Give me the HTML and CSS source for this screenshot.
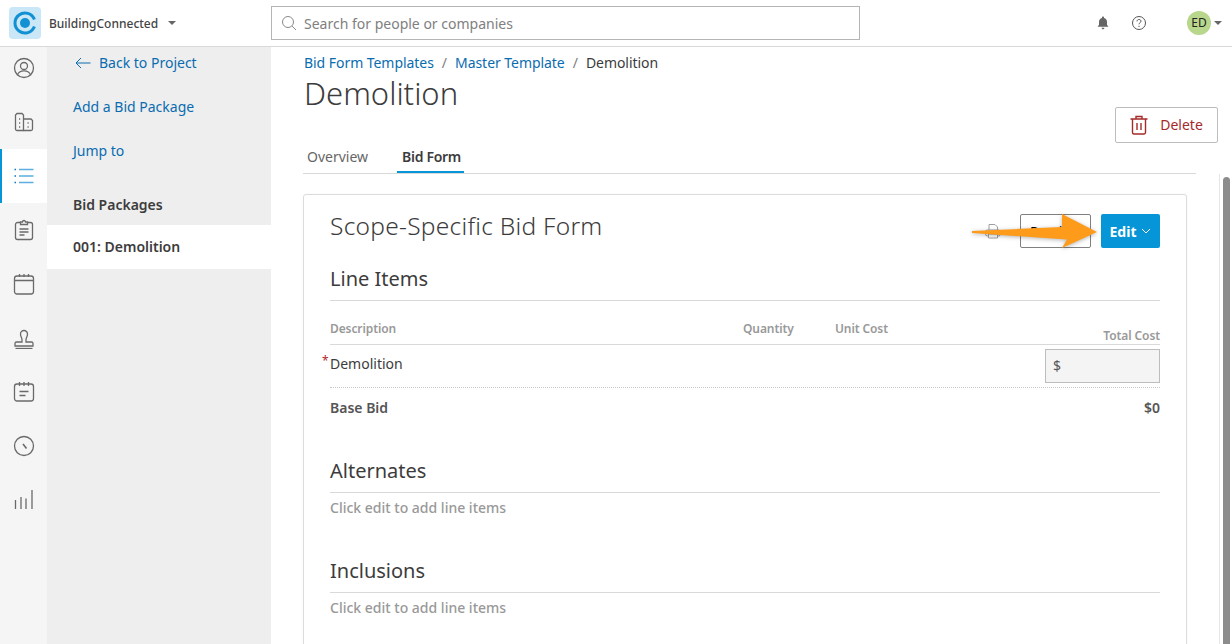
FILE: index.html
```html
<!DOCTYPE html>
<html lang="en">
<head>
  <meta charset="UTF-8" />
  <title>BuildingConnected</title>
  <link rel="stylesheet" href="styles.css">
</head>
<body>

  <!-- Header -->
  <header class="topbar">
    <div class="brand">
      <svg class="brand-logo" viewBox="0 0 32 32" width="32" height="32">
        <rect width="32" height="32" rx="4" fill="#c9e7f6"/>
        <path d="M25.400 12.600A10 10 0 1 0 25.400 19.400" fill="none" stroke="#1190d4" stroke-width="3"/>
        <circle cx="16" cy="16" r="5" fill="#1190d4"/>
      </svg>
      <span class="brand-name">BuildingConnected</span>
      <span class="caret caret-brand"></span>
    </div>
    <div class="search">
      <svg viewBox="0 0 16 16" width="16" height="16" fill="none" stroke="#8a8a8a" stroke-width="1">
        <circle cx="7" cy="7" r="5.5"/>
        <path d="M11 11l4 4"/>
      </svg>
      <span>Search for people or companies</span>
    </div>
    <div class="top-actions">
      <svg viewBox="0 0 14 14" width="14" height="14" fill="#666">
        <path d="M7 0.6c.6 0 1 .4 1 1v.5c2 .5 3 2 3 4v2.6l1.4 2.1H1.6L3 8.700V6.100c0-2 1-3.500 3-4v-.5c0-.6.4-1 1-1z"/>
        <path d="M5.600 11.700h2.800c0 .9-.6 1.500-1.400 1.500s-1.400-.6-1.400-1.500z"/>
      </svg>
      <svg class="help-icon" viewBox="0 0 16 16" width="16" height="16" fill="none" stroke="#555" stroke-width="1">
        <circle cx="8" cy="8" r="6.500"/>
        <path d="M6 6.400c0-1.200.9-1.900 2-1.900s2 .7 2 1.700c0 1.500-2 1.500-2 3.100"/>
        <path d="M8 10.800v1.200"/>
      </svg>
      <div class="avatar">ED</div>
      <span class="caret caret-user"></span>
    </div>
  </header>

  <div class="app">

    <!-- Icon rail -->
    <nav class="rail">
      <a class="rail-item first">
        <svg viewBox="0 0 22 22" width="22" height="22"><circle cx="11" cy="11" r="9.500"/><circle cx="11" cy="9" r="3.500"/><path d="M4.500 18c.8-3 3-4.200 6.500-4.200s5.700 1.200 6.500 4.200"/></svg>
      </a>
      <a class="rail-item">
        <svg viewBox="0 0 22 22" width="22" height="22"><path d="M4 19.500a1.500 1.500 0 0 1-1.500-1.500V4L4 2.500h5L10.500 4V19.500z"/><path d="M10.500 8h7.500l1.500 1.500V18a1.500 1.500 0 0 1-1.500 1.500H10.500"/><path d="M6 8h1.200M6 12h1.200M6 16h1.200M14.500 12h1.200M14.500 16h1.200"/></svg>
      </a>
      <a class="rail-item active">
        <svg viewBox="0 0 22 22" width="22" height="22"><path d="M6 4.500h14.500M6 11h14.500M6 17.500h14.500"/><path class="dot" d="M1.500 4.500h1.500M1.500 11h1.500M1.500 17.500h1.500"/></svg>
      </a>
      <a class="rail-item">
        <svg viewBox="0 0 22 22" width="22" height="22"><path d="M7.500 3.500H4.500a2 2 0 0 0-2 2v13a2 2 0 0 0 2 2h13a2 2 0 0 0 2-2v-13a2 2 0 0 0-2-2h-3"/><path d="M7.500 5.500V3h2a1.500 1.500 0 0 1 3 0h2v2.500z"/><path d="M6.500 10h9M6.500 13h9M6.500 16h5"/></svg>
      </a>
      <a class="rail-item">
        <svg viewBox="0 0 22 22" width="22" height="22"><rect x="1.500" y="3" width="19" height="18" rx="2.500"/><path d="M1.500 7.500h19M6.500 1v3M11 1v3M15.500 1v3"/></svg>
      </a>
      <a class="rail-item">
        <svg viewBox="0 0 22 22" width="22" height="22"><path d="M9 13c0-2.500-1.500-3-1.500-6a3.500 3.500 0 0 1 7 0c0 3-1.500 3.500-1.500 6"/><path d="M9 13v2H3.500a1.500 1.500 0 0 0-1.500 1.500V19h18v-2.500a1.500 1.500 0 0 0-1.500-1.500H13v-2"/><path d="M2.500 21.500h17"/></svg>
      </a>
      <a class="rail-item">
        <svg viewBox="0 0 22 22" width="22" height="22"><rect x="1.500" y="3" width="19" height="17" rx="2.500"/><path d="M6.500 1v4M11 1v4M15.500 1v4M6.500 10.500h9M6.500 14.500h6"/></svg>
      </a>
      <a class="rail-item">
        <svg viewBox="0 0 22 22" width="22" height="22"><circle cx="11" cy="11" r="9.500"/><path d="M10 9l3.500 4.500" stroke-width="1.600"/></svg>
      </a>
      <a class="rail-item">
        <svg viewBox="0 0 22 22" width="22" height="22"><path d="M2.500 11v9M8 8v12M13 9.500V20M19 1v19"/></svg>
      </a>
    </nav>

    <!-- Sidebar -->
    <aside class="sidebar">
      <a class="side-link back">
        <svg viewBox="0 0 16 12" width="16" height="12" fill="none" stroke="#0a6cb0" stroke-width="1"><path d="M15.500 6H1M6 1L1 6l5 5"/></svg>
        Back to Project
      </a>
      <a class="side-link">Add a Bid Package</a>
      <a class="side-link">Jump to</a>
      <div class="side-title">Bid Packages</div>
      <div class="side-current">001: Demolition</div>
    </aside>

    <!-- Main -->
    <main class="main">
      <div class="page-top">
        <div class="page-head">
          <div>
            <div class="crumbs">
              <a>Bid Form Templates</a><span class="sep">/</span><a>Master Template</a><span class="sep">/</span><span>Demolition</span>
            </div>
            <h1>Demolition</h1>
          </div>
          <button class="btn-delete">
            <svg viewBox="0 0 18 20" width="18" height="20" fill="none" stroke="#a52a2a" stroke-width="1.400"><path d="M0.500 4h17M6 4V1.500h6V4M2.500 4v13.500a1.500 1.500 0 0 0 1.500 1.500h10a1.500 1.500 0 0 0 1.500-1.500V4M7 8v7M11 8v7"/></svg>
            Delete
          </button>
        </div>
        <div class="tabs">
          <a class="tab">Overview</a>
          <a class="tab active">Bid Form</a>
        </div>
      </div>

      <div class="pane">
        <div class="pane-content">
          <section class="card">
            <div class="card-head">
              <h2>Scope-Specific Bid Form</h2>
              <div class="card-actions">
                <svg viewBox="0 0 18 16" width="18" height="16" fill="none" stroke="#a0a0a0" stroke-width="1"><path d="M5 7V1.500h6l2.500 2.500V7"/><rect x="1.500" y="7" width="15" height="6" rx="2"/><path d="M4.500 11h9v4h-9z" fill="#fff"/></svg>
                <button class="btn-preview">Preview</button>
                <button class="btn-edit">Edit
                  <svg viewBox="0 0 10 6" width="10" height="6" fill="none" stroke="#fff" stroke-width="1"><path d="M1 1l4 4 4-4"/></svg>
                </button>
              </div>
            </div>

            <h3>Line Items</h3>
            <div class="line-head">
              <span class="col-desc">Description</span>
              <span class="col-qty">Quantity</span>
              <span class="col-unit">Unit Cost</span>
              <span class="col-total">Total Cost</span>
            </div>
            <div class="line-row">
              <span class="item-name">Demolition</span>
              <div class="money">$</div>
            </div>
            <div class="base-row">
              <span>Base Bid</span>
              <span>$0</span>
            </div>

            <h3 class="group">Alternates</h3>
            <p class="empty">Click edit to add line items</p>

            <h3 class="group">Inclusions</h3>
            <p class="empty">Click edit to add line items</p>
          </section>
        </div>
        <div class="scrollbar"><div class="thumb"></div></div>
      </div>
    </main>
  </div>

  <!-- Orange callout arrow drawn over the page -->
  <svg class="callout" viewBox="0 0 130 40" width="130" height="40">
    <path d="M0 19L90 15L90 2L125 20L90 36L95 27.500L0 21z" fill="#ff9b1a"/>
  </svg>

</body>
</html>
```

FILE: styles.css
```css
* {
  box-sizing: border-box;
  margin: 0;
  padding: 0;
}

body {
  font-family: "Noto Sans", sans-serif;
  font-size: 14px;
  color: #3c3c3c;
  background: #fff;
  height: 644px;
  overflow: hidden;
  position: relative;
}

/* Header */
.topbar {
  height: 47px;
  display: flex;
  align-items: center;
  border-bottom: 1px solid #d9d9d9;
  background: #fff;
}

.brand {
  width: 271px;
  display: flex;
  align-items: center;
  padding-left: 9px;
}

.brand-name {
  margin-left: 8px;
  font-size: 12px;
  font-weight: 500;
  color: #444;
}

.caret {
  width: 0;
  height: 0;
  border-left: 4px solid transparent;
  border-right: 4px solid transparent;
  border-top: 4px solid #666;
}

.caret-brand {
  margin-left: 10px;
}

.search {
  width: 589px;
  height: 34px;
  border: 1px solid #b5b5b5;
  display: flex;
  align-items: center;
  gap: 7px;
  padding-left: 9px;
  color: #808080;
}

.top-actions {
  margin-left: auto;
  display: flex;
  align-items: center;
  padding-right: 10px;
}

.help-icon {
  margin-left: 21px;
}

.avatar {
  width: 24px;
  height: 24px;
  border-radius: 50%;
  background: #b8d78c;
  margin-left: 40px;
  font-size: 12px;
  line-height: 24px;
  text-align: center;
  color: #222;
}

.caret-user {
  margin-left: 3px;
}

.app {
  display: flex;
  height: 597px;
}

/* Icon rail */
.rail {
  width: 47px;
  background: #f5f5f5;
  flex-shrink: 0;
}

.rail-item {
  display: flex;
  height: 54px;
  align-items: center;
  justify-content: center;
  border-left: 2px solid transparent;
  padding-right: 2px;
}

.rail-item.first {
  height: 48px;
  padding-bottom: 6px;
}

.rail-item svg {
  fill: none;
  stroke: #6a6a6a;
  stroke-width: 1.300;
}

.rail-item.active {
  background: #fff;
  border-left-color: #0696d7;
}

.rail-item.active svg {
  stroke: #5aaee0;
  stroke-width: 1.500;
}

.rail-item.active .dot {
  stroke: #0a78c0;
}

/* Sidebar */
.sidebar {
  width: 224px;
  background: #eeeeee;
  flex-shrink: 0;
}

.side-link {
  display: flex;
  align-items: center;
  gap: 8px;
  height: 44px;
  padding-left: 26px;
  color: #0a6cb0;
}

.side-link.back {
  height: 31px;
  margin-bottom: 6px;
  padding-left: 28px;
}

.side-title {
  margin-top: 9px;
  height: 44px;
  line-height: 48px;
  padding-left: 26px;
  font-weight: 600;
}

.side-current {
  height: 44px;
  line-height: 44px;
  padding-left: 26px;
  font-weight: 600;
  background: #fff;
}

/* Main */
.main {
  flex: 1;
  min-width: 0;
  display: flex;
  flex-direction: column;
}

.page-top {
  height: 127px;
  padding-left: 32px;
  flex-shrink: 0;
}

.page-head {
  height: 96px;
  display: flex;
  justify-content: space-between;
  align-items: flex-end;
  padding-right: 14px;
}

.page-head > div {
  align-self: flex-start;
  padding: 6px 0 0 1px;
}

.crumbs {
  letter-spacing: -0.05px;
}

.crumbs a {
  color: #0a6cb0;
}

.sep {
  color: #808080;
  margin: 0 8px;
}

h1 {
  font-size: 31px;
  font-weight: 300;
  line-height: 40px;
  margin-top: 1px;
}

.btn-delete {
  width: 103px;
  height: 36px;
  display: flex;
  align-items: center;
  justify-content: center;
  gap: 12px;
  padding-bottom: 1px;
  background: #fff;
  border: 1px solid #bdbdbd;
  border-radius: 2px;
  font: inherit;
  color: #a52a2a;
}

.tabs {
  width: 893px;
  height: 31px;
  display: flex;
  border-bottom: 1px solid #d9d9d9;
}

.tab {
  padding: 0 5px 0 4px;
  margin-right: 24px;
  line-height: 28px;
  height: 30px;
  color: #666;
  white-space: nowrap;
}

.tab.active {
  width: 67px;
  padding-left: 5px;
  letter-spacing: -0.3px;
  font-weight: 600;
  color: #3c3c3c;
  border-bottom: 2px solid #0696d7;
}

.pane {
  flex: 1;
  min-height: 0;
  display: flex;
}

.pane-content {
  flex: 1;
  min-width: 0;
  overflow: hidden;
  padding: 20px 0 0 32px;
}

.scrollbar {
  width: 13px;
  border-left: 1px solid #e6e6e6;
  padding: 3px 2px 0 3px;
}

.thumb {
  height: 100%;
  background: #8c8c8c;
  border-radius: 4px 4px 0 0;
}

/* Card */
.card {
  width: 884px;
  border: 1px solid #dcdcdc;
  border-radius: 3px;
  padding: 19px 26px 60px;
  box-shadow: 0 0 2px rgba(0, 0, 0, 0.06);
}

.card-head {
  height: 34px;
  display: flex;
  justify-content: space-between;
  align-items: center;
}

h2 {
  align-self: flex-start;
  font-size: 24.5px;
  font-weight: 300;
  line-height: 24px;
  letter-spacing: 0.26px;
}

.card-actions {
  display: flex;
  align-items: center;
}

.btn-preview {
  width: 71px;
  height: 34px;
  margin-left: 18px;
  background: #fff;
  border: 1px solid #808080;
  border-radius: 2px;
  font: inherit;
}

.btn-edit {
  width: 59px;
  height: 34px;
  margin-left: 10px;
  display: flex;
  align-items: center;
  justify-content: center;
  gap: 5px;
  background: #0696d7;
  border: none;
  border-radius: 2px;
  font: inherit;
  font-weight: 700;
  color: #fff;
}

h3 {
  font-size: 20px;
  font-weight: 400;
  height: 37px;
  line-height: 30px;
  margin-top: 16px;
  border-bottom: 1px solid #d9d9d9;
}

h3.group {
  margin-top: 30px;
}

.line-head {
  height: 44px;
  display: flex;
  align-items: flex-start;
  font-size: 12px;
  font-weight: 600;
  letter-spacing: -0.1px;
  color: #999;
  border-bottom: 1px solid #d9d9d9;
  padding-top: 19px;
  line-height: 17px;
}

.col-desc {
  width: 413px;
}

.col-qty {
  width: 92px;
}

.col-total {
  margin-left: auto;
  padding-top: 7px;
}

.line-row {
  height: 43px;
  display: flex;
  justify-content: space-between;
  align-items: flex-start;
  border-bottom: 1px dotted #c8c8c8;
  padding-top: 4px;
}

.item-name {
  position: relative;
  margin-top: 5px;
}

.item-name::before {
  content: "*";
  position: absolute;
  left: -8px;
  top: -2px;
  font-size: 12px;
  color: #b02a2a;
}

.money {
  width: 115px;
  height: 34px;
  background: #f4f4f4;
  border: 1px solid #bdbdbd;
  line-height: 32px;
  padding-left: 7px;
  color: #555;
}

.base-row {
  height: 38px;
  display: flex;
  justify-content: space-between;
  align-items: center;
  font-weight: 600;
  color: #555;
}

.empty {
  font-weight: 500;
  color: #999;
  line-height: 30px;
  margin-bottom: 33px;
}

/* Callout */
.callout {
  position: absolute;
  left: 972px;
  top: 212px;
  filter: drop-shadow(0 1px 2px rgba(0, 0, 0, 0.3));
}
```
